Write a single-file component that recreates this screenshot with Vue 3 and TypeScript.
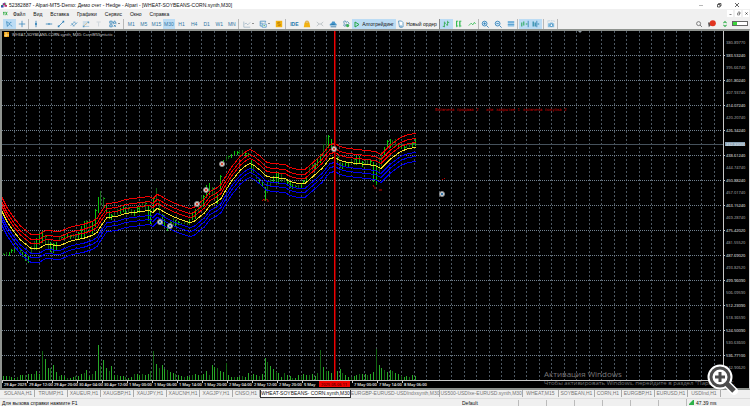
<script setup lang="ts">
type Key = [number, number, number]

const menu = ['Файл', 'Вид', 'Вставка', 'Графики', 'Сервис', 'Окно', 'Справка']
const periods = ['M1', 'M5', 'M15', 'M30', 'H1', 'H4', 'D1', 'W1', 'MN']

const tabs = [
  { t: 'SOLANA,H1', c: '' },
  { t: 'TRUMP,H1', c: '' },
  { t: 'XAUEUR,H1', c: '' },
  { t: 'XAUGBP,H1', c: '' },
  { t: 'XAUJPY,H1', c: '' },
  { t: 'XAUCNH,H1', c: '' },
  { t: 'XAGJPY,H1', c: '' },
  { t: 'CNSO,H1', c: 'short' },
  { t: 'WHEAT-SOYBEANS- CORN.synth,M30', c: 'active' },
  { t: 'EURGBP-EURUSD-USDIndxsynth,M30', c: 'wide' },
  { t: 'US500-USDIxe-EURUSD.synth,M30', c: 'wide' },
  { t: 'WHEAT,M15', c: 'mid' },
  { t: 'SOYBEAN,H1', c: 'mid' },
  { t: 'CORN,H1', c: 'short' },
  { t: 'EURGBP,H1', c: '' },
  { t: 'EURUSD,H1', c: '' },
  { t: 'USDInd,H1', c: '' },
]

const vGrid = Array.from({ length: 57 }, (_, i) => Math.floor(14 + i * 12.5) + 0.5)
const hGrid = Array.from({ length: 13 }, (_, i) => 55.5 + i * 25)

const priceTexts = [
  '380.89770', '383.53240', '395.66740', '401.80240', '407.93740', '414.07240', '420.20740',
  '426.34240', '', '438.61240', '444.74740', '450.88240', '457.01740', '463.15240', '469.28740',
  '475.42020', '481.55520', '487.69020', '493.82520', '499.96090', '506.09590', '512.23090',
  '518.36590', '524.50090', '530.63600', '536.77100', '542.90620', '549.04120',
]
const prices = priceTexts
  .map((t, i) => ({ t, y: 43 + i * 12.5, main: i % 2 === 1 }))
  .filter(p => p.t !== '' && p.y < 376)

const times = [
  '29 Apr 2025', '29 Apr 12:00', '29 Apr 20:00', '30 Apr 04:00', '30 Apr 12:00', '1 May 00:00',
  '1 May 06:00', '1 May 14:00', '1 May 20:00', '2 May 04:00', '2 May 12:00', '2 May 20:00',
  '5 May', '', '7 May 00:00', '7 May 14:00', '8 May 06:00',
].map((t, i) => ({ t, x: 2 + i * 25 }))

const mean: [number, number][] = [
  [2, 211], [7, 221], [13, 230], [20, 239], [31, 248], [39, 248], [46, 244], [60, 245], [72, 240],
  [83, 238], [92, 235], [97, 232], [100, 227], [107, 217], [117, 216], [125, 213], [149, 210],
  [153, 212], [157, 208], [160, 209], [165, 212], [173, 216], [183, 220], [190, 222], [194, 221],
  [200, 216], [204, 213], [210, 205], [216, 202], [221, 198], [225, 191], [232, 180], [240, 170],
  [246, 165], [250, 163], [254, 165], [258, 168], [267, 176], [272, 177], [285, 178], [290, 181],
  [298, 183], [305, 183], [313, 176], [322, 168], [330, 158], [335, 157], [340, 160], [348, 162],
  [357, 163], [375, 165], [381, 168], [390, 159], [399, 152], [408, 148], [416, 147],
]
const band = (d: number): string => mean.map(([x, y]) => `${x},${y + d + 0.5}`).join(' ')
const bands = [
  { p: band(-14), c: 'upper' }, { p: band(-9), c: 'upper' }, { p: band(-5), c: 'upper' },
  { p: band(5), c: 'lower' }, { p: band(9), c: 'lower' }, { p: band(14), c: 'lower' },
  { p: band(0), c: 'mean' },
]

const path: Key[] = [
  [3, 255, 1], [10, 252, 2], [17, 249, 1], [21, 251, 2], [24, 258, 3], [28, 258, 4], [32, 248, 3],
  [36, 243, 6], [42, 236, 6], [46, 242, 4], [50, 246, 5], [54, 249, 5], [60, 238, 2], [67, 236, 2],
  [75, 237, 2], [80, 234, 5], [84, 229, 9], [88, 226, 5], [92, 227, 6], [96, 216, 10], [99, 199, 7],
  [101, 199, 8], [105, 206, 3], [109, 215, 4], [113, 218, 2], [118, 210, 3], [125, 209, 3],
  [132, 213, 3], [138, 210, 3], [144, 204, 3], [148, 212, 8], [151, 219, 7], [154, 195, 7],
  [157, 197, 7], [160, 214, 7], [165, 225, 3], [168, 228, 3], [173, 222, 4], [180, 224, 1],
  [187, 223, 2], [193, 216, 4], [198, 208, 6], [203, 200, 6], [208, 187, 7], [213, 193, 3],
  [217, 198, 5], [220, 182, 7], [223, 162, 3], [228, 157, 2], [235, 153, 2], [243, 152, 2],
  [248, 155, 2], [251, 164, 6], [256, 177, 2], [262, 184, 3], [265, 193, 7], [268, 186, 5],
  [272, 179, 3], [278, 177, 6], [284, 180, 2], [290, 185, 3], [296, 188, 1], [302, 184, 2],
  [307, 177, 3], [310, 168, 3], [316, 164, 3], [321, 157, 5], [325, 146, 8], [329, 139, 6],
  [332, 147, 4], [335, 153, 6], [338, 165, 3], [344, 165, 3], [351, 163, 2], [357, 159, 5],
  [362, 163, 3], [370, 162, 3], [373, 172, 10], [377, 175, 10], [380, 162, 8], [384, 150, 4],
  [389, 142, 5], [393, 145, 3], [396, 142, 4], [400, 148, 2], [406, 147, 2], [411, 143, 2], [416, 143, 4],
]

const volumes = [
  4, 4, 4, 3, 2, 3, 5, 5, 5, 6, 6, 6, 9, 6, 29, 21, 12, 12, 15, 8, 4, 5, 4, 2, 2, 3, 4, 4, 6, 7,
  10, 4, 6, 9, 35, 14, 20, 12, 9, 14, 5, 5, 4, 4, 3, 2, 3, 6, 6, 5, 6, 5, 6, 9, 29, 16, 12, 15,
  11, 10, 8, 7, 6, 5, 4, 3, 4, 3, 5, 6, 5, 5, 6, 9, 5, 15, 13, 12, 9, 8, 17, 5, 3, 3, 3, 3, 4,
  3, 7, 4, 6, 5, 4, 6, 22, 18, 14, 11, 8, 7, 3, 7, 5, 4, 2, 2, 5, 4, 6, 5, 5, 6, 4, 7, 30, 13,
  9, 9, 7, 6, 9, 11, 7, 5, 3, 3, 4, 5, 6, 6, 6, 5, 6, 8, 31, 15, 12, 10, 8, 10, 9, 7, 6, 4, 3,
  4, 3, 5, 4,
]

function priceAt(x: number): [number, number] {
  for (let i = 1; i < path.length; i++) {
    const a = path[i - 1]
    const b = path[i]
    if (x <= b[0]) {
      const k = Math.max(0, (x - a[0]) / (b[0] - a[0]))
      return [a[1] + (b[1] - a[1]) * k, a[2] + (b[2] - a[2]) * k]
    }
  }
  const last = path[path.length - 1]
  return [last[1], last[2]]
}

const bars = volumes.map((v, i) => {
  const x = 3 + Math.round(i * 2.782)
  const [mid, half] = priceAt(x)
  const shift = ((i * 7) % 5) - 2
  const y = Math.round(mid - half + shift / 2)
  return { x, y, h: Math.max(2, Math.round(half * 2)), v, dim: i % 3 === 2 || (v > 28 && v < 32), soft: i % 5 < 2, tick: i % 3 === 0 }
})

const markers = [
  { x: 160, y: 222, c: 'buy' }, { x: 170, y: 226, c: 'buy' }, { x: 197, y: 204, c: 'sell' },
  { x: 206, y: 190, c: 'sell' }, { x: 222, y: 164, c: 'sell' }, { x: 334, y: 149, c: 'sell' },
  { x: 442, y: 194, c: 'buy' },
]
</script>

<template>
  <div class="terminal">
    <header class="title">
      <svg class="logo" viewBox="0 0 7 6"><path d="M0 3h2V1h2V0h1v3H3v3H0z" fill="#334bb5" /><path d="M3 1h2v2h2v2H4V3H2z" fill="#b32c6c" /><path d="M0 3h2v1H0zM5 1h1v2H5z" fill="#43a348" /></svg>
      <span class="caption">52382887 - Alpari-MT5-Demo: Демо счет - Hedge - Alpari - [WHEAT-SOYBEANS-CORN.synth,M30]</span>
      <button class="win" aria-label="Свернуть"><svg viewBox="0 0 6 6"><path d="M1 3.500h4" stroke="#888" stroke-width=".6" /></svg></button>
      <button class="win" aria-label="Развернуть"><svg viewBox="0 0 6 6"><path d="M1.500 2.500h2.500v2.500H1.500zM2.500 2.500V1.500H5v2.500H4" fill="none" stroke="#222" stroke-width=".7" /></svg></button>
      <button class="win" aria-label="Закрыть"><svg viewBox="0 0 6 6"><path d="M1 1l4 4M5 1L1 5" stroke="#222" stroke-width=".7" /></svg></button>
    </header>

    <nav class="menu">
      <svg class="doc" viewBox="0 0 6 6"><path d="M1 1v4M0 2h2M3 1l2 4M5 1L3 5" fill="none" stroke="#25a83a" /></svg>
      <a v-for="m in menu" :key="m" href="#">{{ m }}</a>
      <span class="mdi">
        <button aria-label="Свернуть окно"><svg viewBox="0 0 5 5"><path d="M1.500 3.500h2" stroke="#555" stroke-width=".7" /></svg></button>
        <button aria-label="Восстановить окно"><svg viewBox="0 0 5 5"><path d="M1.500 2h2v2h-2zM2 1h2v2" fill="none" stroke="#555" stroke-width=".6" /></svg></button>
        <button aria-label="Закрыть окно"><svg viewBox="0 0 5 5"><path d="M1.500 1.500l2 2M3.500 1.500l-2 2" stroke="#333" stroke-width=".8" /></svg></button>
      </span>
    </nav>

    <div class="toolbar">
      <div class="group pair">
        <button class="on" aria-label="Курсор"><svg viewBox="0 0 10 10"><path d="M2 2l1 6 1.500-2 2-1zM6 3h2M7 6l1.500 2" fill="none" stroke="#3b89bd" /></svg></button>
        <button aria-label="Перекрестие"><svg viewBox="0 0 10 10"><path d="M5 1v8M1 5h8" stroke="#3b89bd" /></svg></button>
      </div>
      <div class="group tools">
        <button aria-label="Вертикальная линия"><svg viewBox="0 0 10 10"><path d="M5 1v8" stroke="#2f7fb5" /><circle cx="5" cy="5" r="1.300" fill="#2f7fb5" /></svg></button>
        <button aria-label="Горизонтальная линия"><svg viewBox="0 0 10 10"><path d="M1 5h8" stroke="#2f7fb5" /><circle cx="5" cy="5" r="1" fill="#2f7fb5" /></svg></button>
        <button aria-label="Трендовая линия"><svg viewBox="0 0 10 10"><path d="M2 8l6-6" stroke="#2f7fb5" /><path d="M1 7h2v2H1zM7 1h2v2H7z" fill="#2f7fb5" /></svg></button>
        <button aria-label="Канал"><svg viewBox="0 0 10 10"><path d="M1 7l5-5M4 8l5-5M2 4l3 4M5 2l3 3" fill="none" stroke="#3b89bd" stroke-width=".8" /></svg></button>
        <button aria-label="Фибоначчи"><svg viewBox="0 0 10 10"><path d="M1 2.500h7M1 5h5M2 8h7" stroke="#9cc3dd" /><path d="M2 8l5-5" stroke="#e0b260" stroke-width=".7" /><path d="M7 2h2v2H7zM1 7h2v2H1z" fill="#5c9dc7" /></svg></button>
        <button aria-label="Текст"><svg viewBox="0 0 10 10"><path d="M2 2.500h5M4.500 3v5" stroke="#c5cfd6" /></svg></button>
        <button class="drop" aria-label="Фигуры"><svg viewBox="0 0 10 10"><path d="M1 1.500h3v2.500H1zM5 4l2-3 2 3zM1 6h3v2.500H1zM6 6l2.500 2.500M8.500 6L6 8.500" fill="none" stroke="#3182b8" /></svg><i></i></button>
      </div>
      <div class="group periods">
        <button v-for="p in periods" :key="p" :class="{ on: p === 'M30' }">{{ p }}</button>
      </div>
      <div class="group views">
        <button class="drop" aria-label="Тип графика"><svg viewBox="0 0 10 10"><path d="M1 2v7h8M2 5l2-1 2 2 3-3" fill="none" stroke="#8fa9bb" stroke-width=".8" /></svg><i></i></button>
        <button class="drop" aria-label="Шаблоны"><svg viewBox="0 0 10 10"><path d="M1.500 1.500h7l-1 2M1.500 1.500v6h3M1.500 4h3" fill="none" stroke="#4a91c2" /><path d="M4 5h5v4H4z" fill="#fff" stroke="#4a91c2" /><path d="M5.500 7h2" stroke="#32a54c" /></svg><i></i></button>
        <button aria-label="Символы"><svg viewBox="0 0 10 10"><rect x="1" y="1" width="8" height="8" fill="#f2b211" /><path d="M6.500 3h-3v2h3v2h-3" fill="none" stroke="#a76e00" stroke-width=".8" /></svg></button>
      </div>
      <div class="group market">
        <button class="ide">IDE</button>
        <button aria-label="Маркет"><svg viewBox="0 0 10 10"><path d="M2 3h6l1 6H1z" fill="#f2b211" /><path d="M3.500 4V1.500h3V4" fill="none" stroke="#d8950a" /></svg></button>
        <button aria-label="Сигналы"><svg viewBox="0 0 10 10"><path d="M1 2.500l3 2.500-3 2.500M9 2.500L6 5l3 2.500M4 5h2" fill="none" stroke="#b5bcc0" /></svg></button>
        <button aria-label="Облако"><svg viewBox="0 0 10 10"><path d="M1 7V5l2-1 1-2h3l1 2 1.500 1v2z" fill="#4797cc" /><path d="M3 5.500h4M2 8.500h7" stroke="#236da1" /></svg></button>
        <button aria-label="VPS"><svg viewBox="0 0 10 10"><path d="M2 2l2-1 1 2 2-1 2 2-2 2-2-1-1 3-2-1 1-2z" fill="none" stroke="#548fb4" /><circle cx="7" cy="7" r="2" fill="#3cae56" /></svg></button>
      </div>
      <button class="on wideBtn"><svg viewBox="0 0 6 8"><path d="M1 2l4 2.500L1 7z" fill="none" stroke="#23a843" /></svg>Алготрейдинг</button>
      <button class="wideBtn order"><svg viewBox="0 0 6 8"><path d="M.5 1h3L5 2.500V7H1.500zM3 5v3" fill="#fff" stroke="#4b8fbd" stroke-width=".8" /></svg>Новый ордер</button>
      <div class="group three">
        <button class="on" aria-label="Бары"><svg viewBox="0 0 10 10"><path d="M3 2v7M1 8h2M3 4h2M7 1v6M7 3h2M5 6h2" stroke="#29aa45" /></svg></button>
        <button aria-label="Свечи"><svg viewBox="0 0 10 10"><path d="M4 1.500H2v6h2M8 1.500H6v6h2M2 1v8M6 1v8" fill="none" stroke="#29b948" /></svg></button>
        <button aria-label="Линия"><svg viewBox="0 0 10 10"><path d="M1 7l3-3 2 2 2-3 1.500 2" fill="none" stroke="#29b948" /></svg></button>
      </div>
      <div class="group three">
        <button aria-label="Увеличить"><svg viewBox="0 0 10 10"><circle cx="4.500" cy="4.500" r="3" fill="#d4e9f7" stroke="#2779b2" /><path d="M7 7l2.500 2.500M3 4.500h3M4.500 3v3" stroke="#2779b2" /></svg></button>
        <button aria-label="Уменьшить"><svg viewBox="0 0 10 10"><circle cx="4.500" cy="4.500" r="3" fill="#d4e9f7" stroke="#2779b2" /><path d="M7 7l2.500 2.500M3 4.500h3" stroke="#2779b2" /></svg></button>
        <button aria-label="Окна"><svg viewBox="0 0 10 10"><path d="M1 1.500h8v7H1z" fill="#a8d0ea" /><path d="M1 2.500h8M1 6h8" stroke="#4796cc" stroke-width="1.300" /></svg></button>
      </div>
      <div class="group shift">
        <button class="on" aria-label="Автопрокрутка"><svg viewBox="0 0 10 10"><path d="M1 3v5M3.500 2v5M6 5h2" stroke="#28a859" stroke-width="1.300" /><path d="M9 1v8" stroke="#297eb4" /></svg></button>
        <button class="on" aria-label="Сдвиг графика"><svg viewBox="0 0 10 10"><path d="M1.500 2v6M4 3v5M7 5h2" stroke="#2887a8" stroke-width="1.500" /><path d="M6 1v8" stroke="#297eb4" /></svg></button>
      </div>
      <div class="group shot">
        <button aria-label="Снимок"><svg viewBox="0 0 10 10"><path d="M1 3V1h8v2" fill="none" stroke="#9bbcd0" stroke-dasharray="1 1" /><path d="M1 4h2l1-1h3l1 1h1v5H1z" fill="#8ec0df" /><circle cx="5.500" cy="6.500" r="1.700" fill="#fff" stroke="#3182b8" /></svg></button>
      </div>
      <div class="tail">
        <button aria-label="Поиск"><svg viewBox="0 0 10 10"><circle cx="4.500" cy="4.500" r="2.500" fill="none" stroke="#444" stroke-width=".8" /><path d="M6.500 6.500l2 2" stroke="#444" /></svg></button>
        <button aria-label="Уведомления"><svg viewBox="0 0 10 10"><path d="M0 3h5v4H3L1 9z" fill="#555" /><circle cx="6" cy="4" r="3.800" fill="#e13420" /></svg></button>
        <button aria-label="Соединение"><svg viewBox="0 0 10 10"><path d="M3 4l2-2 2 2M3 6l2 2 2-2" fill="none" stroke="#43b559" stroke-width="1.300" /></svg></button>
        <span class="meter"></span>
      </div>
    </div>

    <main class="chart">
      <svg viewBox="0 0 747 357" preserveAspectRatio="xMinYMin meet" role="img" aria-label="График">
        <g transform="translate(-2 -31)">
          <line v-for="x in vGrid" :key="'v' + x" class="vgrid" :x1="x" :x2="x" y1="31" y2="380" />
          <line v-for="y in hGrid" :key="'h' + y" class="hgrid" x1="2" x2="722" :y1="y" :y2="y" />
          <path class="last" d="M2 144.500H723" />
          <g class="bars">
            <template v-for="b in bars" :key="b.x">
              <rect :class="{ dim: b.dim }" :x="b.x" :y="380 - b.v" width="1" :height="b.v" />
              <rect class="ohlc" :class="{ dim: b.soft }" :x="b.x" :y="b.y" width="1" :height="b.h" />
              <rect v-if="b.tick" class="ohlc" :x="b.x + 1" :y="b.y + 1" width="1" height="1" />
            </template>
          </g>
          <polyline v-for="b in bands" :key="b.p" :class="b.c" :points="b.p" />
          <rect class="cursor" x="334" y="31" width="1" height="349" />
          <rect class="cursor soft" x="335" y="31" width="1" height="349" />
          <g v-for="m in markers" :key="m.x" :class="m.c">
            <circle :cx="m.x" :cy="m.y" r="2.500" class="ring" />
            <circle :cx="m.x" :cy="m.y" r="1.200" />
          </g>
          <path class="signals" d="M262 201l2-2 1 2M266 199l2 1v2M373 185l1 2M375 187v2M379 190h3M442 180l1-1M444 179l1-1" />
          <g class="alert">
            <text x="435" y="111">Включена продажа 2</text>
            <text x="486" y="111">или закрытие 1</text>
            <text x="523" y="111">включена покупка 2</text>
          </g>
          <g class="head">
            <rect x="4" y="32" width="5" height="5" fill="#e89a12" /><path d="M6 32v3h3M5 35v1h2" stroke="#ffe28a" fill="none" />
            <text x="12" y="36">WHEAT-SOYBEANS-CORN.synth, M30: CornWSSyntetic</text>
          </g>
          <path d="M578 31h4l-2 2z" fill="#8a949c" />
          <path class="edge" d="M723.500 31V380.500M2 380.500H723.500" />
          <g class="prices">
            <g v-for="p in prices" :key="p.y" :class="{ minor: !p.main }">
              <path :d="`M724 ${p.y}h1`" /><text x="726" :y="p.y + 1">{{ p.t }}</text>
            </g>
            <rect x="725" y="142" width="20" height="4" fill="#8ba2b5" /><text class="now" x="726" y="146">432.83000</text>
          </g>
          <g class="times">
            <g v-for="t in times" :key="t.x"><path :d="`M${t.x + 0.5} 381v2`" /><text :x="t.x + 2" y="386">{{ t.t }}</text></g>
            <rect x="319" y="381" width="31" height="6" fill="#f00000" /><text class="picked" x="321" y="386">2025.05.06 11</text>
          </g>
        </g>
      </svg>
    </main>

    <div class="tabs">
      <button v-for="t in tabs" :key="t.t" :class="t.c">{{ t.t }}</button>
    </div>

    <footer class="status">
      <span class="hint">Для вызова справки нажмите F1</span>
      <span class="profile">Default</span>
      <span class="cell"></span><span class="cell"></span><span class="cell"></span><span class="cell"></span><span class="cell"></span><span class="cell"></span>
      <span class="ping"><svg viewBox="0 0 5 5"><path d="M0 5V4l4-4h1v5z" fill="#2eb14a" /></svg>47.39 ms</span>
    </footer>

    <aside class="activation"><strong>Активация Windows</strong><span>Чтобы активировать Windows, перейдите в раздел "Параметры".</span></aside>
    <button class="zoom" aria-label="Увеличить изображение">
      <svg viewBox="0 0 32 32">
        <path d="M19 19l8 8" stroke="#fff" stroke-width="8" stroke-linecap="round" />
        <circle cx="13" cy="13" r="10" fill="#fff" stroke="#fff" stroke-width="5" />
        <path d="M19 19l8 8" stroke="#4c4c4c" stroke-width="5" />
        <circle cx="13" cy="13" r="9" fill="#fff" stroke="#4c4c4c" stroke-width="3" />
        <path d="M8 13h10M13 8v10" stroke="#4c4c4c" stroke-width="3" />
      </svg>
    </button>
  </div>
</template>

<style>
body { background: #000; }
</style>

<style scoped>
.terminal { position: relative; display: flex; flex-direction: column; height: 100vh; overflow: hidden; background: #f0f0f0; color: #111; font: 5px/8px "Liberation Sans", Arial, sans-serif; white-space: nowrap; }
button { display: flex; align-items: center; justify-content: center; margin: 0; padding: 0; border: 0; background: none; color: inherit; font: inherit; }
svg { display: block; flex: none; }
.title { display: flex; align-items: center; height: 9px; padding: 0 4px 0 1px; background: #fff; }
.logo { width: 6px; height: 6px; }
.caption { flex: 1; margin-left: 2px; }
.win { width: 18px; height: 9px; }
.win svg { width: 6px; height: 6px; }
.menu { display: flex; align-items: center; gap: 8px; height: 9px; padding-left: 3px; background: #f0f0f0; }
.menu a { color: #111; text-decoration: none; }
.doc { width: 5px; height: 5px; margin-right: -3px; }
.mdi { display: flex; gap: 2px; margin-left: auto; padding-right: 1px; }
.mdi button { width: 6px; height: 7px; background: #fff; }
.mdi svg { width: 5px; height: 5px; }
.toolbar { display: flex; align-items: center; height: 11px; padding: 0 2px 0 3px; background: #f0f0f0; }
.toolbar button { height: 10px; color: #3278a5; }
.toolbar button svg { width: 8px; height: 8px; }
.toolbar .on { background: #bcdcf4; }
.group { display: flex; height: 10px; box-sizing: border-box; border-right: 1px solid #b8b8b8; flex: none; }
.group button { flex: 1; }
.pair { width: 26px; }
.tools { width: 95px; padding-left: 1px; }
.tools .drop { flex: 0 0 18px; }
.periods { width: 115px; padding-left: 1px; }
.views { width: 47px; padding-left: 1px; }
.market { width: 66px; padding-left: 2px; border-right: 0; }
.toolbar .ide { font-weight: 700; color: #2878ad; }
.views .drop { flex: 0 0 16px; }
.drop i { width: 0; margin-left: 1px; border: 1px solid transparent; border-top-color: #333; }
.toolbar .wideBtn { width: 44px; gap: 2px; color: #111; flex: none; }
.toolbar .wideBtn svg { width: 6px; }
.toolbar .order { border-right: 1px solid #888; }
.three { width: 39px; }
.shift { width: 26px; padding: 0 1px; }
.shot { width: 14px; }
.tail { display: flex; align-items: center; margin-left: auto; }
.tail button { width: 13px; }
.meter { width: 16px; height: 5px; margin-left: 1px; box-sizing: border-box; border: 1px solid #666; background: linear-gradient(90deg, #3bd73b 25%, #fff 25%); }
.chart { flex: 1; min-height: 0; box-sizing: border-box; background: #000; border: solid #8f938f; border-width: 2px 1px 2px 2px; border-right-color: #ddd; }
.chart svg { width: 100%; height: 100%; }
.vgrid { stroke: #4d5862; stroke-dasharray: 2 2; }
.hgrid { stroke: #71808e; stroke-dasharray: 1 1; }
.last { stroke: #46525c; }
.bars { fill: #27a827; }
.bars .ohlc { fill: #0cc00c; }
.bars .dim, .bars .ohlc.dim { fill: #126312; }
polyline { fill: none; stroke-width: 1; shape-rendering: crispEdges; }
.upper { stroke: #f00000; }
.lower { stroke: #0000f0; }
.mean { stroke: #f5dc28; }
.cursor { fill: #f00000; }
.cursor.soft { fill: #700000; }
.ring { stroke: #888; stroke-width: 1; fill: #ddd; }
.buy { fill: #3274a8; }
.sell { fill: #d84830; }
.signals { stroke: #c00000; fill: none; }
.alert { fill: #d00000; font: 4px "DejaVu Sans Mono", monospace; }
.head text { fill: #ddd; font: 4px "Open Sans", sans-serif; }
.edge { fill: none; stroke: #c8c8c8; }
.prices, .times { fill: #f4f4f4; stroke: none; font: 4px "Open Sans", sans-serif; }
.prices path, .times path { stroke: #ccc; }
.prices .minor { fill: #b8b8b8; }
.prices .minor path { stroke: none; }
.prices .now { fill: #e8eef2; }
.times { font-weight: 600; }
.times .picked { fill: #500; }
.tabs { display: flex; height: 8px; padding-left: 2px; background: #f0f0f0; color: #777; }
.tabs button { flex: 0 0 33px; height: 7px; line-height: 7px; border-right: 1px solid #aaa; box-sizing: border-box; }
.tabs .short { flex-basis: 27px; }
.tabs .mid { flex-basis: 36px; }
.tabs .wide { flex-basis: 82px; }
.tabs .active { flex-basis: 87px; height: 8px; background: #fff; border: 1px solid #333; border-top: 0; color: #111; }
.status { display: flex; align-items: center; height: 8px; box-sizing: border-box; border-top: 1px solid #ddd; background: #f0f0f0; }
.hint { flex: 1; padding-left: 2px; }
.profile { width: 56px; }
.cell { width: 27px; height: 6px; border-left: 1px solid #bbb; }
.ping { display: flex; align-items: center; gap: 2px; width: 61px; padding-left: 2px; border-left: 1px solid #bbb; }
.ping svg { width: 5px; height: 5px; }
.activation { position: absolute; right: 18px; bottom: 19px; width: 188px; color: #777; font: 6px/8px "Open Sans", sans-serif; }
.activation strong { display: block; font-size: 8px; font-weight: 400; line-height: 10px; }
.activation span { display: block; line-height: 8px; }
.zoom { position: absolute; right: 11px; bottom: 10px; width: 32px; height: 32px; }
.zoom svg { width: 32px; height: 32px; }
</style>
